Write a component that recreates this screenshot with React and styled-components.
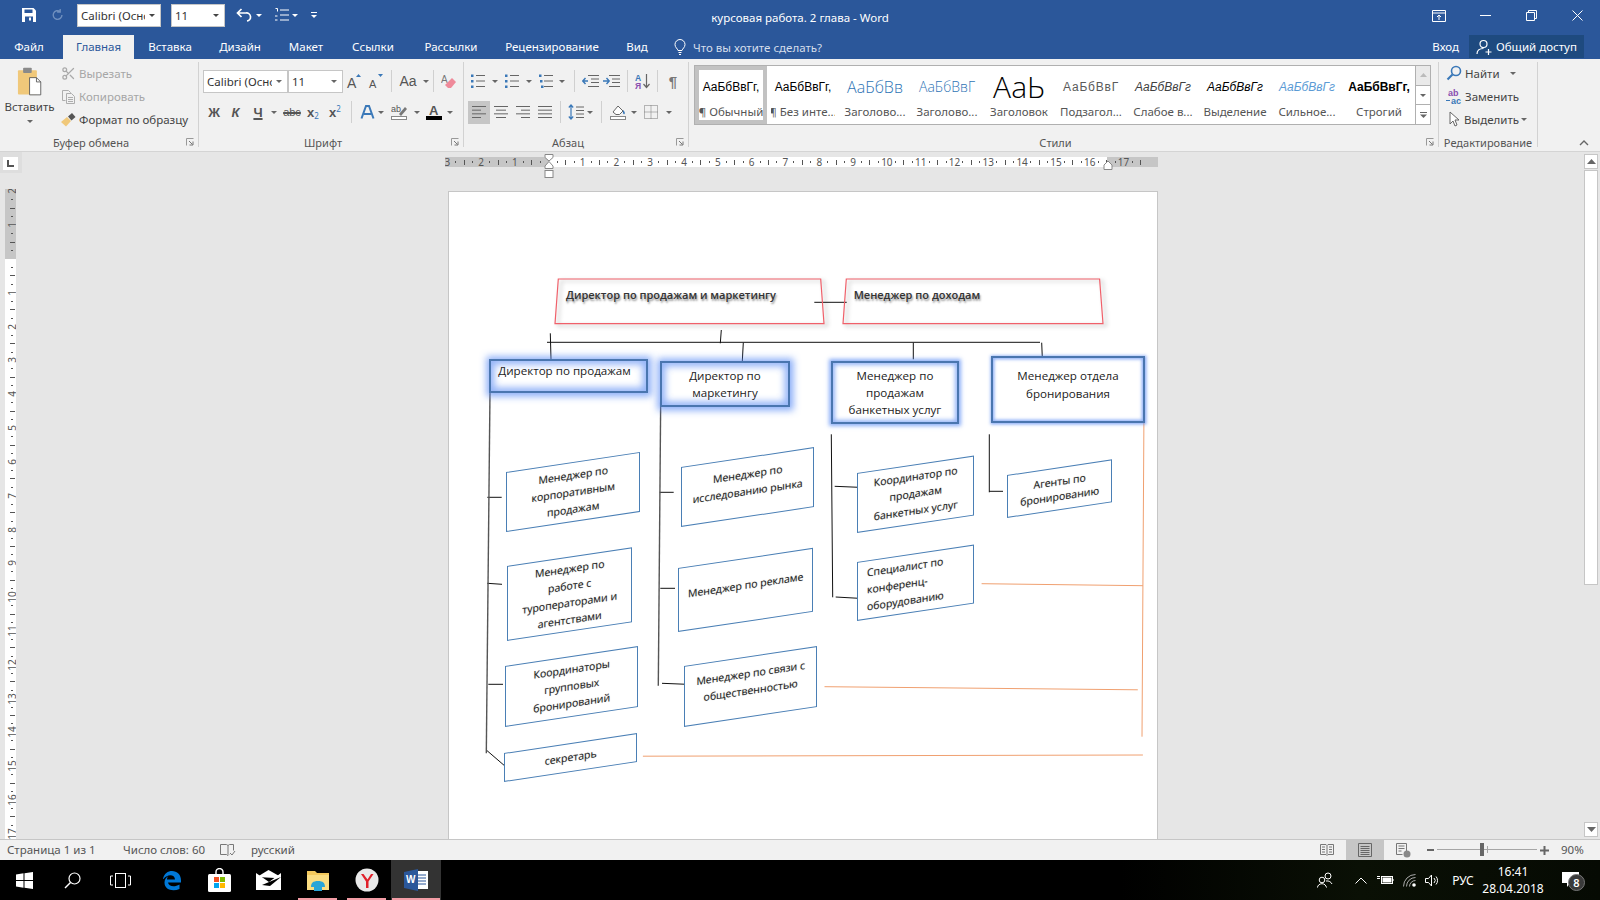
import React from "react";
import styled, { createGlobalStyle } from "styled-components";
import { Scissors } from "lucide-react";

const BLUE = "#2b579a";
const UI = '"Noto Sans", "Open Sans", sans-serif';
const PX = 449;
const PY = 192;

const Global = createGlobalStyle`
  html, body { margin: 0; padding: 0; background: #000; }
  * { box-sizing: border-box; }
`;

const Shell = styled.div`
  width: 1600px;
  height: 900px;
  overflow: hidden;
  display: flex;
  flex-direction: column;
  font-family: ${UI};
  font-size: 11.5px;
  color: #444;
`;

/* title bar */
const TitleBar = styled.header`
  height: 59px;
  background: ${BLUE};
  color: #fff;
  flex: none;
`;
const TopRow = styled.div`
  height: 35px;
  display: grid;
  grid-template-columns: 1fr auto 1fr;
  align-items: start;
`;
const Qat = styled.div`
  display: flex;
  align-items: center;
  height: 30px;
`;
const QatBtn = styled.div`
  width: ${(p) => p.$w}px;
  margin-left: ${(p) => p.$ml || 0}px;
  display: flex;
  justify-content: center;
  align-items: center;
`;
const ComboBox = styled.div`
  width: ${(p) => p.$w}px;
  height: 23px;
  margin-left: ${(p) => p.$ml || 0}px;
  background: #fff;
  border: 1px solid #c6c6c6;
  color: #333;
  display: flex;
  align-items: center;
  padding: 0 5px 0 3px;
  font-size: 11.5px;
  white-space: nowrap;
  overflow: hidden;
`;
const ComboText = styled.span`
  overflow: hidden;
  flex: 1;
  margin-right: 4px;
`;
const DocTitle = styled.div`
  font-size: 11.5px;
  line-height: 36px;
`;
const WinControls = styled.div`
  display: flex;
  justify-content: flex-end;
  height: 31px;
  align-items: center;
`;
const WinBtn = styled.div`
  width: 46px;
  display: flex;
  justify-content: center;
`;
const TabRow = styled.nav`
  height: 24px;
  display: flex;
  align-items: stretch;
`;
const Tab = styled.div`
  width: ${(p) => p.$w}px;
  margin-right: ${(p) => p.$mr || 0}px;
  text-align: center;
  line-height: 24px;
  background: ${(p) => (p.$active ? "#f1f1f1" : "transparent")};
  color: ${(p) => (p.$active ? BLUE : "#fff")};
`;
const TellMe = styled.div`
  margin-left: 10px;
  display: flex;
  align-items: center;
  gap: 7px;
  color: #d5deeb;
`;
const SignIn = styled.div`
  margin-left: auto;
  line-height: 24px;
  margin-right: 10px;
`;
const Share = styled.div`
  width: 115px;
  margin: 0 16px 1px 0;
  background: #1e4a7f;
  display: flex;
  align-items: center;
  gap: 4px;
  padding-left: 7px;
`;

/* ribbon */
const Ribbon = styled.section`
  height: 93px;
  flex: none;
  background: #f1f1f1;
  border-bottom: 1px solid #d4d4d4;
  display: flex;
`;
const Group = styled.div`
  width: ${(p) => p.$w}px;
  flex: none;
  display: flex;
  flex-direction: column;
`;
const GroupBody = styled.div`
  flex: 1;
  padding: ${(p) => p.$pad || "10.5px 0 0 4px"};
  display: ${(p) => (p.$row ? "flex" : "block")};
`;
const GroupDivider = styled.div`
  width: 1px;
  margin: 3px 0 4px;
  background: #d2d2d2;
  flex: none;
`;
const LabelRow = styled.div`
  height: 14px;
  display: flex;
  align-items: center;
  flex: none;
  margin-bottom: 2px;
`;
const GroupLabel = styled.div`
  flex: 1;
  text-align: center;
  font-size: 11px;
  color: #555;
  white-space: nowrap;
`;
const Launcher = styled.div`
  width: 16px;
  display: flex;
  justify-content: center;
`;
const ToolRow = styled.div`
  height: 23px;
  display: flex;
  align-items: center;
  margin-bottom: 8px;
`;
const Tool = styled.div`
  width: ${(p) => p.$w}px;
  height: 23px;
  flex: none;
  margin-left: ${(p) => p.$ml || 0}px;
  display: flex;
  align-items: center;
  justify-content: center;
  background: ${(p) => (p.$on ? "#c6c6c6" : "transparent")};
  color: #555;
`;
const ToolSep = styled.div`
  width: ${(p) => p.$w}px;
  height: 22px;
  flex: none;
  display: flex;
  justify-content: center;
  &::before {
    content: "";
    width: 1px;
    background: #d0d0d0;
  }
`;
const Caret = styled.i`
  display: block;
  width: 0;
  height: 0;
  border-left: 3px solid transparent;
  border-right: 3px solid transparent;
  border-top: 3px solid ${(p) => p.$color || "#666"};
`;
const Glyph = styled.span`
  font-family: "Liberation Sans", sans-serif;
  font-weight: ${(p) => p.$weight || 700};
  font-size: ${(p) => p.$size || 13}px;
  color: ${(p) => p.$color || "#555"};
  font-style: ${(p) => (p.$italic ? "italic" : "normal")};
  text-decoration: ${(p) => p.$deco || "none"};
  text-decoration-thickness: 1.5px;
`;
const Sub = styled.span`
  font-size: 8px;
  color: #3a78b8;
  position: relative;
  top: ${(p) => (p.$up ? -4 : 3)}px;
`;
const PasteCol = styled.div`
  width: 59px;
  display: flex;
  flex-direction: column;
  align-items: center;
  flex: none;
  padding-top: 4px;
`;
const PasteLabel = styled.div`
  margin-top: 2px;
  color: #444;
  line-height: 16px;
`;
const PasteCaret = styled.div`
  margin-top: 5px;
`;
const SmallStack = styled.div`
  display: flex;
  flex-direction: column;
`;
const SmallRow = styled.div`
  height: 23px;
  display: flex;
  align-items: center;
  gap: ${(p) => p.$gap || 2}px;
  white-space: nowrap;
  color: ${(p) => (p.$dim ? "#a6a6a6" : "#444")};
`;
const SmallIcon = styled.div`
  width: 18px;
  display: flex;
  justify-content: center;
  flex: none;
`;
const CaretGap = styled.div`
  margin-left: ${(p) => p.$ml}px;
`;

const Gallery = styled.div`
  margin: 6px 0 0 5px;
  width: 737px;
  height: 60px;
  border: 1px solid #b0b0b0;
  background: #fff;
  display: flex;
`;
const StyleItem = styled.div`
  width: 72px;
  flex: none;
  overflow: hidden;
  text-align: center;
  border: 4px solid ${(p) => (p.$on ? "#c2c2c2" : "transparent")};
`;
const StylePreview = styled.div`
  height: 34px;
  line-height: 34px;
  white-space: nowrap;
  overflow: hidden;
  font-family: ${(p) => p.$font || '"Liberation Sans", sans-serif'};
  font-size: ${(p) => p.$size || 12}px;
  font-weight: ${(p) => p.$weight || 400};
  font-style: ${(p) => (p.$italic ? "italic" : "normal")};
  color: ${(p) => p.$color || "#000"};
  letter-spacing: ${(p) => p.$track || 0}px;
`;
const StyleName = styled.div`
  font-size: 11.5px;
  line-height: 16px;
  color: #555;
  white-space: nowrap;
  overflow: hidden;
  margin: 0 -4px;
`;
const GalleryScroll = styled.div`
  width: 15px;
  margin-left: auto;
  border-left: 1px solid #b0b0b0;
  display: flex;
  flex-direction: column;
`;
const GalleryBtn = styled.div`
  flex: 1;
  display: flex;
  align-items: center;
  justify-content: center;
  background: ${(p) => (p.$off ? "#eaeaea" : "#fff")};
  & + & {
    border-top: 1px solid #b0b0b0;
  }
`;
const CollapseSlot = styled.div`
  flex: 1;
  display: flex;
  align-items: flex-end;
  justify-content: center;
  padding: 0 0 5px 30px;
`;

/* workspace */
const Workspace = styled.main`
  flex: 1;
  min-height: 0;
  background: #e6e6e6;
  display: flex;
`;
const LeftRail = styled.div`
  width: 22px;
  flex: none;
  display: flex;
  flex-direction: column;
`;
const CornerBox = styled.div`
  height: 21px;
  background: #dedede;
  padding: 5px 3px 3px;
  flex: none;
`;
const CornerInner = styled.div`
  width: 15px;
  height: 13px;
  background: #fff;
  display: flex;
  align-items: center;
  justify-content: center;
`;
const VRuler = styled.div`
  margin: 16px 0 0 5px;
  width: 11px;
  flex: 1;
  min-height: 0;
  overflow: hidden;
  background: linear-gradient(#c6c6c6 0 70px, #fff 70px);
  display: flex;
  flex-direction: column;
`;
const VMark = styled.div`
  height: 8.4625px;
  flex: none;
  display: flex;
  align-items: center;
  justify-content: center;
  color: #555;
  font-size: 10px;
  padding-left: 3px;
  &:first-child {
    margin-top: -1.8px;
  }
`;
const VNum = styled.span`
  display: block;
  transform: rotate(-90deg);
  line-height: 8px;
`;
const VDot = styled.i`
  width: ${(p) => (p.$long ? 5 : 2)}px;
  height: 1px;
  background: #555;
`;
const Center = styled.div`
  flex: 1;
  min-width: 0;
  display: flex;
  flex-direction: column;
`;
const RulerBar = styled.div`
  position: relative;
  height: 25px;
  flex: none;
  padding: 5px 0 0 423px;
`;
const RulerTrack = styled.div`
  width: 713px;
  height: 10px;
  overflow: hidden;
  display: flex;
  background: linear-gradient(
    90deg,
    #c6c6c6 0 104px,
    #fff 104px 662px,
    #c6c6c6 662px
  );
`;
const HMark = styled.div`
  width: 8.4625px;
  flex: none;
  display: flex;
  align-items: center;
  justify-content: center;
  font-size: 10px;
  line-height: 10px;
  color: #555;
  white-space: nowrap;
  &:first-child {
    margin-left: -1.93px;
  }
`;
const HDot = styled.i`
  width: 1px;
  height: ${(p) => (p.$long ? 5 : 2)}px;
  background: #555;
`;
const IndentMark = styled.div`
  position: absolute;
  top: ${(p) => p.$y}px;
  left: ${(p) => p.$x}px;
  line-height: 0;
`;
const DocScroll = styled.div`
  flex: 1;
  min-height: 0;
  overflow: hidden;
  padding: 14px 0 0 426px;
`;
const Page = styled.div`
  position: relative;
  width: 710px;
  height: 1000px;
  background: #fff;
  border: 1px solid #c6c6c6;
  font-family: "Open Sans", "Noto Sans", sans-serif;
  font-size: 11.6px;
  color: #222;
`;
const Wires = styled.svg`
  position: absolute;
  left: 0;
  top: 0;
`;
const RedBox = styled.div`
  position: absolute;
  left: ${(p) => p.$x - PX}px;
  top: ${(p) => p.$y - PY}px;
  width: ${(p) => p.$w}px;
  height: ${(p) => p.$h}px;
  padding: ${(p) => p.$pad};
  font-weight: 600;
  font-size: 11px;
  line-height: 16px;
  color: #333;
  text-shadow: 1px 2px 2px rgba(0, 0, 0, 0.45);
  white-space: nowrap;
`;
const RedShape = styled.svg`
  position: absolute;
  left: 0;
  top: 0;
  overflow: visible;
  filter: drop-shadow(3px 2px 2px rgba(0, 0, 0, 0.3));
`;
const BlueBox = styled.div`
  position: absolute;
  left: ${(p) => p.$x - PX}px;
  top: ${(p) => p.$y - PY}px;
  width: ${(p) => p.$w}px;
  height: ${(p) => p.$h}px;
  border: 2px solid #4a76b0;
  background: #fff;
  box-shadow: 0 0 ${(p) => p.$glow}px ${(p) => p.$glow / 2}px rgba(90, 140, 245, 0.7),
    inset 0 0 ${(p) => p.$glow}px ${(p) => p.$glow / 2}px rgba(90, 140, 245, 0.65);
  display: flex;
  flex-direction: column;
  justify-content: ${(p) => (p.$left ? "flex-start" : "center")};
  align-items: ${(p) => (p.$left ? "flex-start" : "center")};
  padding: ${(p) => p.$pad || 0};
  text-align: center;
  line-height: ${(p) => p.$lh || 17}px;
  color: #222;
  white-space: nowrap;
`;
const Slant = styled.div`
  position: absolute;
  left: ${(p) => p.$x - PX}px;
  top: ${(p) => p.$y - PY}px;
  width: ${(p) => p.$w}px;
  height: ${(p) => p.$h}px;
  border: 1px solid #4a7fb5;
  background: #fff;
  transform-origin: 0 0;
  transform: skewY(-8.5deg);
  display: flex;
  flex-direction: column;
  justify-content: center;
  align-items: ${(p) => (p.$left ? "flex-start" : "center")};
  padding: ${(p) => p.$pad || 0};
  font-size: 10.5px;
  line-height: ${(p) => p.$lh || 17}px;
  color: #222;
  white-space: nowrap;
  text-shadow: 0 0 1px rgba(0, 0, 0, 0.35);
`;

const ScrollRail = styled.div`
  width: 16px;
  flex: none;
  padding: 2px 2px 2px 0;
  display: flex;
  flex-direction: column;
`;
const ScrollBtn = styled.div`
  height: 15px;
  background: #fff;
  border: 1px solid #c6c6c6;
  display: flex;
  align-items: center;
  justify-content: center;
  flex: none;
`;
const ScrollThumb = styled.div`
  height: 415px;
  margin-top: 1px;
  background: #fff;
  border: 1px solid #c6c6c6;
  flex: none;
`;
const ScrollGap = styled.div`
  flex: 1;
`;

/* status bar */
const StatusBar = styled.footer`
  height: 21px;
  flex: none;
  background: #f1f1f1;
  border-top: 1px solid #c6c6c6;
  display: flex;
  align-items: stretch;
  color: #555;
  padding-left: 7px;
`;
const StatusText = styled.div`
  width: ${(p) => p.$w}px;
  margin-left: ${(p) => p.$ml || 0}px;
  line-height: 20px;
  flex: none;
  white-space: nowrap;
`;
const ViewBtn = styled.div`
  width: ${(p) => p.$w}px;
  margin-left: ${(p) => p.$ml || 0}px;
  display: flex;
  justify-content: center;
  align-items: center;
  background: ${(p) => (p.$on ? "#c6c6c6" : "transparent")};
  flex: none;
`;
const ZoomTrack = styled.div`
  position: relative;
  width: 100px;
  height: 100%;
  flex: none;
  &::before {
    content: "";
    position: absolute;
    left: 0;
    right: 0;
    top: 9px;
    height: 1px;
    background: #a6a6a6;
  }
  &::after {
    content: "";
    position: absolute;
    left: 50px;
    top: 6px;
    width: 1px;
    height: 7px;
    background: #a6a6a6;
  }
`;
const ZoomThumb = styled.div`
  position: absolute;
  left: 43px;
  top: 3px;
  width: 4px;
  height: 13px;
  background: #666;
`;
const ZoomText = styled.div`
  margin-left: 9px;
  line-height: 20px;
`;

/* taskbar */
const Taskbar = styled.footer`
  height: 40px;
  flex: none;
  background: linear-gradient(90deg, #000 70%, #0a1005 85%, #060a03);
  display: flex;
  color: #fff;
`;
const TaskBtn = styled.div`
  position: relative;
  width: ${(p) => p.$w || 48}px;
  flex: none;
  display: flex;
  align-items: center;
  justify-content: center;
  background: ${(p) => (p.$active ? "#333" : "transparent")};
  ${(p) =>
    p.$open &&
    `&::after {
      content: "";
      position: absolute;
      left: ${p.$active ? 1 : 5}px;
      right: ${p.$active ? 1 : 5}px;
      bottom: 0;
      height: 2px;
      background: #f29ca5;
    }`}
`;
const Tray = styled.div`
  margin-left: auto;
  display: flex;
  padding-right: 4px;
`;
const TrayItem = styled.div`
  position: relative;
  width: ${(p) => p.$w}px;
  flex: none;
  display: flex;
  flex-direction: column;
  align-items: center;
  justify-content: center;
  font-size: 12px;
  line-height: 17px;
`;
const Badge = styled.div`
  position: absolute;
  left: 24px;
  top: 14px;
  width: 17px;
  height: 17px;
  border-radius: 50%;
  background: #3a3a3a;
  border: 1px solid #777;
  font-size: 11px;
  line-height: 15px;
  text-align: center;
  font-weight: 600;
`;

const Ico = ({ w = 16, h = 16, vw, vh, children }) => (
  <svg width={w} height={h} viewBox={`0 0 ${vw || w} ${vh || h}`} fill="none">
    {children}
  </svg>
);

const Launch = () => (
  <Ico w={8} h={8}>
    <path d="M0.5 7.5v-7h7" stroke="#999" />
    <path d="M3 3l3.5 3.5M7 3.5V7H3.5" stroke="#777" />
  </Ico>
);

const Lines = ({ rows, color = "#666", w = 16 }) => (
  <Ico w={w} h={14}>
    {rows.map(([a, b], i) => (
      <path key={i} d={`M${a} ${1.5 + i * (11 / (rows.length - 1))}H${b}`} stroke={color} />
    ))}
  </Ico>
);

const ListIcon = ({ kind }) => (
  <Ico w={16} h={14}>
    {[1.5, 7, 12.5].map((y, i) => (
      <React.Fragment key={y}>
        <rect x={kind === "multi" && i ? 1 + i : 1} y={y - 1} width="2.5" height="2.5" fill="#3a78b8" />
        <path d={`M6 ${y}H15`} stroke="#666" />
      </React.Fragment>
    ))}
  </Ico>
);

const rulerH = () => {
  const out = [];
  for (let i = -12; i <= 70; i++) {
    const m = ((i % 4) + 4) % 4;
    if (m === 0) {
      const n = Math.abs(i / 4);
      out.push(<HMark key={i}>{n === 0 ? "" : n}</HMark>);
    } else {
      out.push(
        <HMark key={i}>
          <HDot $long={m === 2} />
        </HMark>
      );
    }
  }
  return out;
};

const rulerV = () => {
  const out = [];
  for (let i = -8; i <= 70; i++) {
    const m = ((i % 4) + 4) % 4;
    if (m === 0) {
      const n = Math.abs(i / 4);
      out.push(
        <VMark key={i}>
          <VNum>{n === 0 ? "" : n}</VNum>
        </VMark>
      );
    } else {
      out.push(
        <VMark key={i}>
          <VDot $long={m === 2} />
        </VMark>
      );
    }
  }
  return out;
};

const OPEN = '"Open Sans", sans-serif';
const galleryItems = [
  { p: "АаБбВвГг,", n: "¶ Обычный", on: true, size: 12 },
  { p: "АаБбВвГг,", n: "¶ Без инте...", size: 12 },
  { p: "АаБбВв", n: "Заголово...", size: 16, color: "#2e74b5", font: OPEN, weight: 300 },
  { p: "АаБбВвГ", n: "Заголово...", size: 14, color: "#2e74b5", font: OPEN, weight: 300 },
  { p: "АаЬ", n: "Заголовок", size: 30, font: OPEN, weight: 300 },
  { p: "АаБбВвГ", n: "Подзагол...", size: 12, color: "#5a5a5a", track: 0.8 },
  { p: "АаБбВвГг", n: "Слабое в...", size: 12, color: "#404040", italic: true },
  { p: "АаБбВвГг", n: "Выделение", size: 12, italic: true },
  { p: "АаБбВвГг", n: "Сильное...", size: 12, color: "#5b9bd5", italic: true },
  { p: "АаБбВвГг,", n: "Строгий", size: 12, weight: 700 },
];

const wires = [
  [814.3, 302.3, 846.7, 302.3],
  [547, 342.3, 1040, 342.3],
  [550.3, 333.3, 551, 359.3],
  [721.3, 330, 720.3, 343.3],
  [743.3, 342.7, 742.3, 361.3],
  [913.3, 342.7, 913.3, 359.3],
  [1041.7, 342.7, 1042.3, 357.7],
  [487.3, 497.3, 501.7, 497.3],
  [487.3, 583.3, 502, 584.3],
  [488.3, 684.3, 503, 684.3],
  [486.3, 750, 505.7, 766.7],
  [659.7, 492.3, 673.7, 492.3],
  [660.3, 588.3, 675, 588.3],
  [662, 683.3, 686.7, 684.3],
  [831.3, 434.3, 832.7, 597.3],
  [834.7, 486.3, 858.7, 487.3],
  [835.7, 597, 858.7, 598.3],
  [989.3, 434.3, 989.3, 492.3],
  [989.3, 491.3, 1003, 491.3],
];
const trunks = [
  [490, 391.7, 486.3, 753.3],
  [660.7, 399.3, 658.3, 685.7],
];
const orange = [
  [1144, 405.7, 1142, 736.7],
  [981.6, 583.7, 1142.9, 585.7],
  [824.5, 686.7, 1137.8, 689.8],
  [642.9, 756.2, 1142.9, 755],
];

const Trapezoid = ({ w, h, points }) => (
  <RedShape width={w} height={h}>
    <polygon points={points} fill="none" stroke="#f0606a" strokeWidth="1.2" />
  </RedShape>
);

const slants = [
  { x: 506.3, y: 472.3, w: 134.4, h: 60, t: ["Менеджер по", "корпоративным", "продажам"] },
  { x: 507.3, y: 566, w: 125.4, h: 75.3, t: ["Менеджер по", "работе с", "туроператорами и", "агентствами"] },
  { x: 505.3, y: 666, w: 133.4, h: 60.7, t: ["Координаторы", "групповых", "бронирований"] },
  { x: 504.3, y: 753.3, w: 133.4, h: 29, t: ["секретарь"] },
  { x: 681.3, y: 467.3, w: 133.4, h: 60, t: ["Менеджер по", "исследованию рынка"], pad: "0 0 8px" },
  { x: 678.3, y: 568.3, w: 135.4, h: 64, t: ["Менеджер по рекламе"], pad: "0 0 10px" },
  { x: 684.3, y: 666, w: 133.4, h: 60.7, t: ["Менеджер по связи с", "общественностью"], pad: "0 0 8px" },
  { x: 857.3, y: 472.7, w: 117.4, h: 59.6, t: ["Координатор  по", "продажам", "банкетных услуг"] },
  { x: 857.3, y: 562.3, w: 117.4, h: 59, t: ["Специалист по", "конференц-", "оборудованию"], left: true, pad: "0 0 0 9px" },
  { x: 1007.3, y: 475.3, w: 105.4, h: 43, t: ["Агенты по", "бронированию"], lh: 15 },
];

const Line = styled.span`
  display: block;
`;

export default function App() {
  return (
    <Shell>
      <Global />
      <TitleBar>
        <TopRow>
          <Qat>
            <QatBtn $w={44} $ml={7}>
              <Ico>
                <path d="M1 1h11.5L15 3.5V15H1z" fill="#fff" />
                <rect x="3.5" y="2.5" width="8" height="3.500" fill={BLUE} />
                <rect x="4" y="9.5" width="8" height="5.500" fill={BLUE} />
                <rect x="8" y="10.500" width="2" height="3" fill="#fff" />
              </Ico>
            </QatBtn>
            <QatBtn $w={14}>
              <Ico>
                <path d="M12.5 8a5 5 0 1 1-2-4M10.5 1v3.5H7" stroke="#6f8fbe" strokeWidth="1.6" />
              </Ico>
            </QatBtn>
            <ComboBox $w={84} $ml={12}>
              <ComboText>Calibri (Оснс</ComboText>
              <Caret $color="#444" />
            </ComboBox>
            <ComboBox $w={54} $ml={10}>
              <ComboText>11</ComboText>
              <Caret $color="#444" />
            </ComboBox>
            <QatBtn $w={20} $ml={9}>
              <Ico>
                <path d="M5.5 2L1.5 6l4 4M2 6h8a4 4 0 0 1 1 8" stroke="#fff" strokeWidth="1.7" />
              </Ico>
            </QatBtn>
            <QatBtn $w={10}>
              <Caret $color="#fff" />
            </QatBtn>
            <QatBtn $w={20} $ml={8}>
              <Ico>
                <path d="M6 3h9M6 8h9M6 13h9" stroke="#fff" />
                <path d="M1.5 1.5h2v3M1 9h2.5M1 13h2.5" stroke="#fff" />
              </Ico>
            </QatBtn>
            <QatBtn $w={6}>
              <Caret $color="#fff" />
            </QatBtn>
            <QatBtn $w={16} $ml={8}>
              <Ico w={8} h={8}>
                <path d="M1 1.5h6" stroke="#fff" />
                <path d="M1 4h6L4 7z" fill="#fff" />
              </Ico>
            </QatBtn>
          </Qat>
          <DocTitle>курсовая работа. 2 глава - Word</DocTitle>
          <WinControls>
            <WinBtn>
              <Ico w={14} h={12}>
                <path d="M.5.5h13v11H.5zM.5 3h13M7 10V5M5 7l2-2 2 2" stroke="#fff" />
              </Ico>
            </WinBtn>
            <WinBtn>
              <Ico w={11} h={11}>
                <path d="M0 5.5h11" stroke="#fff" />
              </Ico>
            </WinBtn>
            <WinBtn>
              <Ico w={11} h={11}>
                <path d="M.5 2.5h8v8h-8zM2.5 2.5v-2h8v8h-2" stroke="#fff" />
              </Ico>
            </WinBtn>
            <WinBtn>
              <Ico w={11} h={11}>
                <path d="M.5.5l10 10M10.5.5l-10 10" stroke="#fff" />
              </Ico>
            </WinBtn>
          </WinControls>
        </TopRow>
        <TabRow>
          <Tab $w={58} $mr={5}>Файл</Tab>
          <Tab $w={71} $active>Главная</Tab>
          <Tab $w={72}>Вставка</Tab>
          <Tab $w={68}>Дизайн</Tab>
          <Tab $w={64}>Макет</Tab>
          <Tab $w={70}>Ссылки</Tab>
          <Tab $w={86}>Рассылки</Tab>
          <Tab $w={116}>Рецензирование</Tab>
          <Tab $w={54}>Вид</Tab>
          <TellMe>
            <Ico w={12} h={16}>
              <path d="M4 11.5C3.5 9.5 1 8.5 1 5.5a5 5 0 0 1 10 0c0 3-2.5 4-3 6zM4.5 13.5h3M5 15.5h2" stroke="#fff" />
            </Ico>
            Что вы хотите сделать?
          </TellMe>
          <SignIn>Вход</SignIn>
          <Share>
            <Ico w={16} h={16}>
              <circle cx="7.5" cy="5" r="3.5" stroke="#fff" strokeWidth="1.2" />
              <path d="M1 15c0-3.5 2.5-5.5 6.5-5.5M9.5 13h6M12.5 10v6" stroke="#fff" strokeWidth="1.2" />
            </Ico>
            Общий доступ
          </Share>
        </TabRow>
      </TitleBar>

      <Ribbon>
        <Group $w={198}>
          <GroupBody $row $pad="2.5px 0 0 0">
            <PasteCol>
              <Ico w={26} h={31} vw={30} vh={36}>
                <rect x="1" y="5" width="22" height="28" rx="1" fill="#f0c87a" />
                <rect x="7" y="2" width="10" height="6" rx="1" fill="#8a8a8a" />
                <path d="M14.5 13.5h8l5 5v15h-13z" fill="#fff" stroke="#555" />
                <path d="M22.5 13.5v5h5" stroke="#555" />
              </Ico>
              <PasteLabel>Вставить</PasteLabel>
              <PasteCaret>
                <Caret />
              </PasteCaret>
            </PasteCol>
            <SmallStack>
              <SmallRow $dim>
                <SmallIcon>
                  <Scissors size={15} color="#a9a9a9" />
                </SmallIcon>
                Вырезать
              </SmallRow>
              <SmallRow $dim>
                <SmallIcon>
                  <Ico w={15} h={15}>
                    <path d="M1.5 1.5h6l2 2v1M1.5 1.5v10h3M5.5 4.5h5l3 3v7h-8z" stroke="#adadad" />
                    <path d="M7 8.5h5M7 10.5h5M7 12.5h5" stroke="#adadad" />
                  </Ico>
                </SmallIcon>
                Копировать
              </SmallRow>
              <SmallRow>
                <SmallIcon>
                  <Ico w={17} h={15}>
                    <path d="M1 10l6-5 4 4-5 5.5z" fill="#f0c87a" />
                    <path d="M8 4.5l4-3.5 3.5 4-4 3.5z" fill="#555" />
                  </Ico>
                </SmallIcon>
                Формат по образцу
              </SmallRow>
            </SmallStack>
          </GroupBody>
          <LabelRow>
            <GroupLabel>Буфер обмена</GroupLabel>
            <Launcher>
              <Launch />
            </Launcher>
          </LabelRow>
        </Group>
        <GroupDivider />

        <Group $w={264}>
          <GroupBody>
            <ToolRow>
              <ComboBox $w={85}>
                <ComboText>Calibri (Оснс</ComboText>
                <Caret />
              </ComboBox>
              <ComboBox $w={55}>
                <ComboText>11</ComboText>
                <Caret />
              </ComboBox>
              <Tool $w={22}>
                <Ico w={16} h={16}>
                  <text x="1" y="15" fontFamily="Liberation Sans" fontSize="14" fill="#555">A</text>
                  <path d="M10 4l2.5-3L15 4z" fill="#3a78b8" />
                </Ico>
              </Tool>
              <Tool $w={21}>
                <Ico w={16} h={16}>
                  <text x="1" y="15" fontFamily="Liberation Sans" fontSize="11" fill="#555">A</text>
                  <path d="M10 1l2.5 3L15 1z" fill="#3a78b8" />
                </Ico>
              </Tool>
              <ToolSep $w={11} />
              <Tool $w={34}>
                <Glyph $weight={400} $size={14}>Aa</Glyph>
                <CaretGap $ml={6}>
                  <Caret />
                </CaretGap>
              </Tool>
              <ToolSep $w={4} />
              <Tool $w={28}>
                <Ico w={16} h={16}>
                  <text x="0" y="10" fontFamily="Liberation Sans" fontSize="10" fill="#777">A</text>
                  <path d="M7 15l-3-3 7-7 4 4-5 6z" fill="#ef8a9a" />
                </Ico>
              </Tool>
            </ToolRow>
            <ToolRow>
              <Tool $w={22}><Glyph>Ж</Glyph></Tool>
              <Tool $w={21}><Glyph $italic>К</Glyph></Tool>
              <Tool $w={24}><Glyph $deco="underline">Ч</Glyph></Tool>
              <Tool $w={8}><Caret /></Tool>
              <Tool $w={28}><Glyph $deco="line-through" $weight={400} $size={11}>abc</Glyph></Tool>
              <Tool $w={14}><Glyph>x</Glyph><Sub>2</Sub></Tool>
              <Tool $w={30}><Glyph>x</Glyph><Sub $up>2</Sub></Tool>
              <ToolSep $w={2} />
              <Tool $w={22} $ml={4}>
                <Ico w={15} h={16}>
                  <path d="M1.5 14.5L6 2h3l4.5 12.5M4 10h7" stroke="#3a78b8" strokeWidth="2" />
                </Ico>
              </Tool>
              <Tool $w={6}><Caret /></Tool>
              <Tool $w={23} $ml={4}>
                <Ico w={17} h={16}>
                  <text x="0" y="8" fontFamily="Liberation Sans" fontSize="9" fill="#555">ab</text>
                  <path d="M8 10l6-7 2 2-6 7z" fill="#777" />
                  <rect x=".5" y="12.5" width="15" height="3" stroke="#888" fill="#fff" />
                </Ico>
              </Tool>
              <Tool $w={12}><Caret /></Tool>
              <Tool $w={22}>
                <Ico w={16} h={16}>
                  <text x="3" y="11" fontFamily="Liberation Sans" fontWeight="700" fontSize="13" fill="#555">A</text>
                  <rect y="12" width="16" height="4" fill="#000" />
                </Ico>
              </Tool>
              <Tool $w={10}><Caret /></Tool>
            </ToolRow>
          </GroupBody>
          <LabelRow>
            <GroupLabel>Шрифт</GroupLabel>
            <Launcher>
              <Launch />
            </Launcher>
          </LabelRow>
        </Group>
        <GroupDivider />

        <Group $w={224}>
          <GroupBody>
            <ToolRow>
              <Tool $w={20}><ListIcon /></Tool>
              <Tool $w={14}><Caret /></Tool>
              <Tool $w={20}><ListIcon /></Tool>
              <Tool $w={14}><Caret /></Tool>
              <Tool $w={20}><ListIcon kind="multi" /></Tool>
              <Tool $w={12}><Caret /></Tool>
              <ToolSep $w={12} />
              <Tool $w={20}>
                <Ico w={17} h={14}>
                  <path d="M6 1.5h11M9 5h8M9 8.5h8M6 12.5h11" stroke="#666" />
                  <path d="M6 7H1M3.5 4L.8 7l2.7 3" stroke="#3a78b8" strokeWidth="1.4" />
                </Ico>
              </Tool>
              <Tool $w={22}>
                <Ico w={17} h={14}>
                  <path d="M6 1.5h11M9 5h8M9 8.5h8M6 12.5h11" stroke="#666" />
                  <path d="M0 7h6M3.5 4l2.7 3-2.7 3" stroke="#3a78b8" strokeWidth="1.4" />
                </Ico>
              </Tool>
              <ToolSep $w={10} />
              <Tool $w={21}>
                <Ico w={16} h={16}>
                  <text x="0" y="7.5" fontFamily="Liberation Sans" fontWeight="700" fontSize="8.5" fill="#3a78b8">А</text>
                  <text x="0" y="15.5" fontFamily="Liberation Sans" fontWeight="700" fontSize="8.5" fill="#8a4fb0">Я</text>
                  <path d="M11.5 1v13M8.5 11l3 3.5 3-3.5" stroke="#666" strokeWidth="1.2" />
                </Ico>
              </Tool>
              <ToolSep $w={9} />
              <Tool $w={22}>
                <Glyph $size={15} $color="#777">¶</Glyph>
              </Tool>
            </ToolRow>
            <ToolRow>
              <Tool $w={22} $on><Lines rows={[[1, 15], [1, 10], [1, 15], [1, 10]]} /></Tool>
              <Tool $w={22}><Lines rows={[[1, 15], [3, 13], [1, 15], [3, 13]]} /></Tool>
              <Tool $w={22}><Lines rows={[[1, 15], [6, 15], [1, 15], [6, 15]]} /></Tool>
              <Tool $w={22}><Lines rows={[[1, 15], [1, 15], [1, 15], [1, 15]]} /></Tool>
              <ToolSep $w={9} />
              <Tool $w={22}>
                <Ico w={16} h={16}>
                  <path d="M3 1v14M.8 3.5L3 1l2.2 2.5M.8 12.5L3 15l2.2-2.5" stroke="#3a78b8" strokeWidth="1.2" />
                  <path d="M8 3h8M8 6.5h8M8 10h8M8 13.5h8" stroke="#666" />
                </Ico>
              </Tool>
              <Tool $w={6}><Caret /></Tool>
              <ToolSep $w={16} />
              <Tool $w={18}>
                <Ico w={17} h={16}>
                  <path d="M3 8l5-6 5 5-3.5 3.5H6z" fill="#fff" stroke="#666" />
                  <path d="M13 6c1.5 1.5 2.5 3 1.5 4s-2-1-1.5-4z" fill="#3a78b8" />
                  <rect x=".5" y="12.5" width="15" height="3" stroke="#888" fill="#fff" />
                </Ico>
              </Tool>
              <Tool $w={14}><Caret /></Tool>
              <Tool $w={20}>
                <Ico w={14} h={14}>
                  <path d="M.5.5h13v13H.5zM7 .5v13M.5 7h13" stroke="#777" strokeDasharray="1 1" />
                </Ico>
              </Tool>
              <Tool $w={15}><Caret /></Tool>
            </ToolRow>
          </GroupBody>
          <LabelRow>
            <GroupLabel>Абзац</GroupLabel>
            <Launcher>
              <Launch />
            </Launcher>
          </LabelRow>
        </Group>
        <GroupDivider />

        <Group $w={749}>
          <GroupBody $pad="0">
            <Gallery>
              {galleryItems.map((s, i) => (
                <StyleItem key={i} $on={s.on}>
                  <StylePreview
                    $size={s.size}
                    $color={s.color}
                    $weight={s.weight}
                    $italic={s.italic}
                    $font={s.font}
                    $track={s.track}
                  >
                    {s.p}
                  </StylePreview>
                  <StyleName>{s.n}</StyleName>
                </StyleItem>
              ))}
              <GalleryScroll>
                <GalleryBtn $off>
                  <Ico w={7} h={4}>
                    <path d="M0 4l3.5-4L7 4z" fill="#bbb" />
                  </Ico>
                </GalleryBtn>
                <GalleryBtn>
                  <Caret />
                </GalleryBtn>
                <GalleryBtn>
                  <Ico w={7} h={6}>
                    <path d="M0 .5h7" stroke="#666" />
                    <path d="M0 2.5h7L3.5 6z" fill="#666" />
                  </Ico>
                </GalleryBtn>
              </GalleryScroll>
            </Gallery>
          </GroupBody>
          <LabelRow>
            <GroupLabel>Стили</GroupLabel>
            <Launcher>
              <Launch />
            </Launcher>
          </LabelRow>
        </Group>
        <GroupDivider />

        <Group $w={98}>
          <GroupBody $pad="2.5px 0 0 7px">
            <SmallStack>
              <SmallRow $gap={3}>
                <Ico w={16} h={16}>
                  <circle cx="10" cy="6" r="4.5" stroke="#3a78b8" strokeWidth="1.6" />
                  <path d="M6.5 9.5L1.5 14.5" stroke="#3a78b8" strokeWidth="2.2" />
                </Ico>
                Найти
                <CaretGap $ml={7}>
                  <Caret />
                </CaretGap>
              </SmallRow>
              <SmallRow $gap={2}>
                <Ico w={17} h={16}>
                  <text x="2" y="8" fontFamily="Liberation Sans" fontWeight="700" fontSize="9" fill="#8a4fb0">ab</text>
                  <text x="5" y="16" fontFamily="Liberation Sans" fontWeight="700" fontSize="9" fill="#3a78b8">ac</text>
                  <path d="M0 12.5h4" stroke="#3a78b8" />
                </Ico>
                Заменить
              </SmallRow>
              <SmallRow $gap={2}>
                <Ico w={16} h={16}>
                  <path d="M4 1v12l3-3 2 5 2-1-2-5h4z" fill="#fff" stroke="#666" />
                </Ico>
                Выделить
                <Caret />
              </SmallRow>
            </SmallStack>
          </GroupBody>
          <LabelRow>
            <GroupLabel>Редактирование</GroupLabel>
          </LabelRow>
        </Group>
        <GroupDivider />
        <CollapseSlot>
          <Ico w={10} h={6}>
            <path d="M1 5l4-4 4 4" stroke="#666" strokeWidth="1.4" />
          </Ico>
        </CollapseSlot>
      </Ribbon>

      <Workspace>
        <LeftRail>
          <CornerBox>
            <CornerInner>
              <Ico w={7} h={7}>
                <path d="M1 0v6h6" stroke="#555" strokeWidth="2" />
              </Ico>
            </CornerInner>
          </CornerBox>
          <VRuler>{rulerV()}</VRuler>
        </LeftRail>

        <Center>
          <RulerBar>
            <RulerTrack>{rulerH()}</RulerTrack>
            <IndentMark $x={522} $y={2}>
              <Ico w={10} h={24}>
                <path d="M1 .5h8v3L5 7 1 3.5zM1 12L5 7.500 9 12v2.500H1z" fill="#fff" stroke="#888" />
                <rect x="1" y="16.5" width="8" height="7" fill="#fff" stroke="#888" />
              </Ico>
            </IndentMark>
            <IndentMark $x={1081} $y={8}>
              <Ico w={10} h={10}>
                <path d="M1 9.5V5l4-4 4 4v4.5z" fill="#fff" stroke="#888" />
              </Ico>
            </IndentMark>
          </RulerBar>
          <DocScroll>
            <Page>
              <Wires width="708" height="700" viewBox={`${PX} ${PY} 708 700`}>
                {wires.map(([a, b, c, d], i) => (
                  <line key={i} x1={a} y1={b} x2={c} y2={d} stroke="#111" strokeWidth="1" />
                ))}
                {trunks.map(([a, b, c, d], i) => (
                  <line key={i} x1={a} y1={b} x2={c} y2={d} stroke="#555" strokeWidth="1.4" />
                ))}
                {orange.map(([a, b, c, d], i) => (
                  <line key={i} x1={a} y1={b} x2={c} y2={d} stroke="#f0a070" strokeWidth="1" />
                ))}
              </Wires>

              <RedBox $x={555} $y={279.3} $w={270} $h={45} $pad="8px 0 0 11px">
                <Trapezoid w={270} h={45} points="3.3,0 265.7,0 269,44.7 0,44.7" />
                Директор по продажам и маркетингу
              </RedBox>
              <RedBox $x={842.7} $y={279.3} $w={260} $h={45} $pad="8px 0 0 11px">
                <Trapezoid w={260} h={45} points="3.3,0 256.6,0 260,44.7 0,44.7" />
                Менеджер по доходам
              </RedBox>

              <BlueBox $x={489.3} $y={359.3} $w={158.4} $h={33.4} $glow={7} $left $pad="1px 0 0 7px">
                Директор по продажам
              </BlueBox>
              <BlueBox $x={660.3} $y={361.3} $w={129.4} $h={45.4} $glow={7}>
                <Line>Директор по</Line>
                <Line>маркетингу</Line>
              </BlueBox>
              <BlueBox $x={831.3} $y={361.3} $w={127.4} $h={62.4} $glow={4}>
                <Line>Менеджер по</Line>
                <Line>продажам</Line>
                <Line>банкетных услуг</Line>
              </BlueBox>
              <BlueBox $x={991.3} $y={355.7} $w={153.4} $h={67} $glow={3} $lh={18} $pad="0 0 8px">
                <Line>Менеджер отдела</Line>
                <Line>бронирования</Line>
              </BlueBox>

              {slants.map((s) => (
                <Slant key={s.t[0] + s.x} $x={s.x} $y={s.y} $w={s.w} $h={s.h} $pad={s.pad} $left={s.left} $lh={s.lh}>
                  {s.t.map((l) => (
                    <Line key={l}>{l}</Line>
                  ))}
                </Slant>
              ))}
            </Page>
          </DocScroll>
        </Center>

        <ScrollRail>
          <ScrollBtn>
            <Ico w={9} h={5}>
              <path d="M0 5l4.5-5L9 5z" fill="#666" />
            </Ico>
          </ScrollBtn>
          <ScrollThumb />
          <ScrollGap />
          <ScrollBtn>
            <Ico w={9} h={5}>
              <path d="M0 0l4.5 5L9 0z" fill="#666" />
            </Ico>
          </ScrollBtn>
        </ScrollRail>
      </Workspace>

      <StatusBar>
        <StatusText $w={116}>Страница 1 из 1</StatusText>
        <StatusText $w={97}>Число слов: 60</StatusText>
        <ViewBtn $w={16}>
          <Ico w={16} h={16}>
            <path d="M.5 2.5h6l1.5 1 1.5-1h4v6M.5 2.5v10h6l1.5 1 1-1M8 3.5v9M10 11l2 2 3-4" stroke="#777" />
          </Ico>
        </ViewBtn>
        <StatusText $w={100} $ml={15}>русский</StatusText>
        <ViewBtn $w={26} $ml={963}>
          <Ico w={14} h={14}>
            <path d="M.5 1.5h5.5l1 1 1-1h5.5v10H8l-1 1-1-1H.5zM7 2.5v9M2 4h3M2 6.5h3M2 9h3M9 4h3M9 6.5h3M9 9h3" stroke="#777" />
          </Ico>
        </ViewBtn>
        <ViewBtn $w={38} $ml={6} $on>
          <Ico w={14} h={14}>
            <path d="M.5.5h13v13H.5zM2.5 3.5h9M2.5 5.5h9M2.5 7.5h9M2.5 9.5h9M2.5 11.5h9" stroke="#666" />
          </Ico>
        </ViewBtn>
        <ViewBtn $w={38}>
          <Ico w={15} h={15}>
            <path d="M.5.5h10v9M.5.5v11h6M2.5 3h6M2.5 5.5h6M2.5 8h3" stroke="#777" />
            <circle cx="11" cy="11" r="3.5" fill="#888" />
          </Ico>
        </ViewBtn>
        <ViewBtn $w={14} $ml={1}>
          <Ico w={7} h={3}>
            <rect width="7" height="2" fill="#666" />
          </Ico>
        </ViewBtn>
        <ZoomTrack>
          <ZoomThumb />
        </ZoomTrack>
        <ViewBtn $w={15}>
          <Ico w={9} h={9}>
            <path d="M0 4.5h9M4.5 0v9" stroke="#666" strokeWidth="2" />
          </Ico>
        </ViewBtn>
        <ZoomText>90%</ZoomText>
      </StatusBar>

      <Taskbar>
        <TaskBtn>
          <Ico w={17} h={17}>
            <path d="M0 2.5L7.5 1.3v6.8H0zM8.5 1.2L17 0v8.1H8.5zM0 9h7.5v6.8L0 14.6zM8.5 9H17v8l-8.5-1.2z" fill="#fff" />
          </Ico>
        </TaskBtn>
        <TaskBtn>
          <Ico w={17} h={17}>
            <circle cx="10.5" cy="6.5" r="5.5" stroke="#fff" strokeWidth="1.2" />
            <path d="M6.5 10.5L1 16" stroke="#fff" strokeWidth="1.4" />
          </Ico>
        </TaskBtn>
        <TaskBtn>
          <Ico w={21} h={15}>
            <rect x="5.5" y=".5" width="10" height="14" stroke="#fff" />
            <path d="M3 3H.5v9H3M18 3h2.5v9H18" stroke="#fff" />
          </Ico>
        </TaskBtn>
        <TaskBtn $w={3} />
        <TaskBtn>
          <Ico w={21} h={21}>
            <path d="M2 9C3 3.5 7 1 11 1c5 0 9 3.500 9 9.500v2H7c.5 4 6.500 5 11.500 2v4.500c-6 2.500-15 1.500-15-6.500 0-3 1.500-5 4-6.500-1 1-1.500 2-1.500 3.500h8c0-5-7.500-6-11.500-.5z" fill="#0078d7" />
          </Ico>
        </TaskBtn>
        <TaskBtn $w={49}>
          <Ico w={23} h={24}>
            <path d="M8 7V4a3.500 3.500 0 0 1 7 0v3" stroke="#fff" strokeWidth="1.4" />
            <rect y="6" width="23" height="18" rx="1.500" fill="#fff" />
            <rect x="6" y="9" width="5" height="5" fill="#f25022" />
            <rect x="12" y="9" width="5" height="5" fill="#7fba00" />
            <rect x="6" y="15" width="5" height="5" fill="#00a4ef" />
            <rect x="12" y="15" width="5" height="5" fill="#ffb900" />
          </Ico>
        </TaskBtn>
        <TaskBtn $w={49}>
          <Ico w={25} h={20}>
            <path d="M0 3v17h25V3l-12 9z" fill="#fff" />
            <path d="M12.500 0L25 7 19 8 1 7z" fill="#fff" />
            <path d="M6 15l19-8-11 9z" fill="#000" />
          </Ico>
        </TaskBtn>
        <TaskBtn $w={49} $open>
          <Ico w={22} h={21}>
            <path d="M0 1h8l2 2h12v17H0z" fill="#f4c95d" />
            <rect y="5" width="22" height="15" fill="#fbdd82" />
            <path d="M4 17c0-4 2-6 7-6s7 2 7 6h-3v4H7v-4z" fill="#2aa5d8" />
          </Ico>
        </TaskBtn>
        <TaskBtn $w={49} $open>
          <Ico w={24} h={24}>
            <circle cx="12" cy="12" r="11.500" fill="#e9e9e9" />
            <path d="M6 6l5 7.500V20h2.500v-6.500L18.500 6H16l-3.500 5.500L8.500 6z" fill="#e0202a" />
          </Ico>
        </TaskBtn>
        <TaskBtn $w={50} $active $open>
          <Ico w={24} h={22}>
            <rect x="10" y="2" width="14" height="18" fill="#fff" />
            <path d="M13 6h9M13 9h9M13 12h9M13 15h9" stroke="#2b579a" />
            <path d="M0 3l14-3v22L0 19z" fill="#2b579a" />
            <text x="2" y="14" fontFamily="Liberation Sans" fontWeight="700" fontSize="10" fill="#fff">W</text>
          </Ico>
        </TaskBtn>
        <Tray>
          <TrayItem $w={50}>
            <Ico w={16} h={16}>
              <circle cx="11" cy="4" r="3" stroke="#fff" />
              <circle cx="5" cy="8" r="2.800" stroke="#fff" />
              <path d="M.5 15.500c0-2 2-3.800 4.500-3.800s4 1.800 4.500 3.800M9 9c3-.5 5 1 6 3" stroke="#fff" />
            </Ico>
          </TrayItem>
          <TrayItem $w={22}>
            <Ico w={12} h={7}>
              <path d="M.5 6.500L6 1l5.500 5.500" stroke="#fff" />
            </Ico>
          </TrayItem>
          <TrayItem $w={26}>
            <Ico w={17} h={10}>
              <rect x="4.500" y="1.500" width="11" height="7" stroke="#fff" />
              <rect x="5.500" y="2.500" width="9" height="5" fill="#fff" />
              <path d="M16 4v2M0 1.500h3M0 3.500h3" stroke="#fff" />
            </Ico>
          </TrayItem>
          <TrayItem $w={23}>
            <Ico w={14} h={13}>
              <path d="M.5 12.500a12 12 0 0 1 12-12M3.500 12.500a9 9 0 0 1 9-9M6.500 12.500a6 6 0 0 1 6-6" stroke="#aaa" />
              <circle cx="11" cy="11" r="1.800" fill="#fff" />
            </Ico>
          </TrayItem>
          <TrayItem $w={23}>
            <Ico w={16} h={13}>
              <path d="M.5 4.500h3l3-3.500v11l-3-3.500h-3zM9 4a3.500 3.500 0 0 1 0 5M11 2.500a6 6 0 0 1 0 8" stroke="#fff" />
            </Ico>
          </TrayItem>
          <TrayItem $w={38}>РУС</TrayItem>
          <TrayItem $w={62}>
            <span>16:41</span>
            <span>28.04.2018</span>
          </TrayItem>
          <TrayItem $w={52}>
            <Ico w={17} h={16}>
              <path d="M0 0h17v11H8l-3 4v-4H0z" fill="#fff" />
            </Ico>
            <Badge>8</Badge>
          </TrayItem>
        </Tray>
      </Taskbar>
    </Shell>
  );
}
